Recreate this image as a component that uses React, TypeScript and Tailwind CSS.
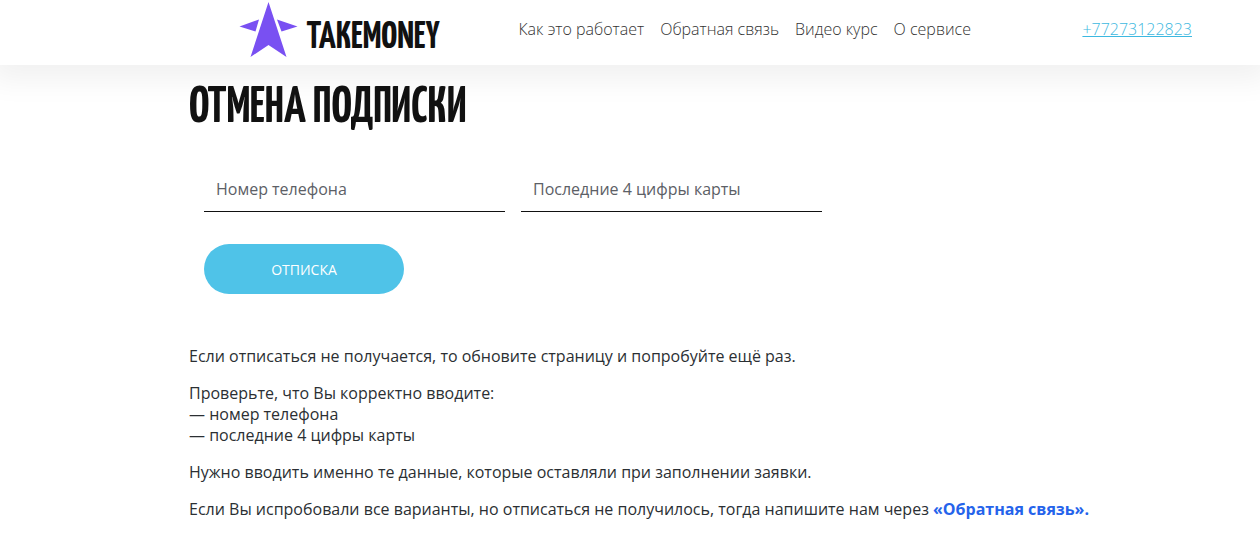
import { useState } from 'react';
import type { FormEvent } from 'react';

const navLinks = [
  { label: 'Как это работает', href: '#how' },
  { label: 'Обратная связь', href: '#feedback' },
  { label: 'Видео курс', href: '#course' },
  { label: 'О сервисе', href: '#about' },
];

const inputClass =
  'w-full h-12 px-3 pt-0.5 bg-transparent border-b border-[#111111] text-base text-[#111111] placeholder:text-[#5c6066] outline-none';

export default function App() {
  const [phone, setPhone] = useState('');
  const [card, setCard] = useState('');

  const handleSubmit = (e: FormEvent) => {
    e.preventDefault();
    // TODO: send the unsubscribe request
  };

  return (
    <div className="min-h-screen overflow-x-hidden bg-white font-['Open_Sans',sans-serif] text-base text-[#2b2f33]">
      {/* Header */}
      <header className="flex h-[65px] items-start bg-white pl-[19%] pr-[68px] shadow-[0_5px_30px_10px_rgba(0,0,0,0.06)]">
        <a href="/" className="flex w-[279px] items-start">
          <svg width="60" height="58" viewBox="0 0 60 58" fill="#7950f2" aria-hidden="true">
            <path d="M29.500 2 L47.500 57 L29.500 45 L11.500 57 Z" />
            <path d="M20 19.500 L0.500 26.500 L16.500 31.500 Z" />
            <path d="M38 19.500 L58.500 26.500 L42.500 31.500 Z" />
          </svg>
          <span className="ml-[7px] mt-[18px] font-['Yanone_Kaffeesatz','Fira_Sans_Extra_Condensed','Open_Sans_Condensed',sans-serif] text-[39px] leading-10 font-bold text-[#111111]">
            TAKEMONEY
          </span>
        </a>
        <nav className="flex grow gap-4 pt-[17px] font-light text-[#333333]">
          {navLinks.map((link) => (
            <a key={link.href} href={link.href}>
              {link.label}
            </a>
          ))}
        </nav>
        <a href="tel:+77273122823" className="pt-[17px] font-light text-[#3db8e0] underline">
          +77273122823
        </a>
      </header>

      <main className="pt-5 pr-16 pl-[15%]">
        <h1 className="font-['Yanone_Kaffeesatz','Fira_Sans_Extra_Condensed','Open_Sans_Condensed',sans-serif] text-[50px] leading-12 font-bold text-[#111111]">
          ОТМЕНА ПОДПИСКИ
        </h1>

        {/* Unsubscribe Form */}
        <form onSubmit={handleSubmit} className="mt-[31px] px-[15px]">
          <div className="grid max-w-[618px] grid-cols-2 gap-4">
            <input
              type="tel"
              aria-label="Номер телефона"
              placeholder="Номер телефона"
              value={phone}
              onChange={(e) => setPhone(e.target.value)}
              className={inputClass}
            />
            <input
              type="text"
              aria-label="Последние 4 цифры карты"
              placeholder="Последние 4 цифры карты"
              maxLength={4}
              value={card}
              onChange={(e) => setCard(e.target.value)}
              className={inputClass}
            />
          </div>
          <button
            type="submit"
            className="mt-8 h-[50px] w-[200px] cursor-pointer rounded-full bg-[#4fc3e8] pt-0.5 text-sm text-white"
          >
            ОТПИСКА
          </button>
        </form>

        {/* Help text */}
        <div className="mt-[52px] flex flex-col gap-4 leading-[21px]">
          <p>Если отписаться не получается, то обновите страницу и попробуйте ещё раз.</p>
          <p>
            Проверьте, что Вы корректно вводите:
            <br />— номер телефона
            <br />— последние 4 цифры карты
          </p>
          <p>Нужно вводить именно те данные, которые оставляли при заполнении заявки.</p>
          <p>
            Если Вы испробовали все варианты, но отписаться не получилось, тогда напишите нам через{' '}
            <a href="#feedback" className="font-bold text-[#2563eb]">
              «Обратная связь».
            </a>
          </p>
        </div>
      </main>
    </div>
  );
}
